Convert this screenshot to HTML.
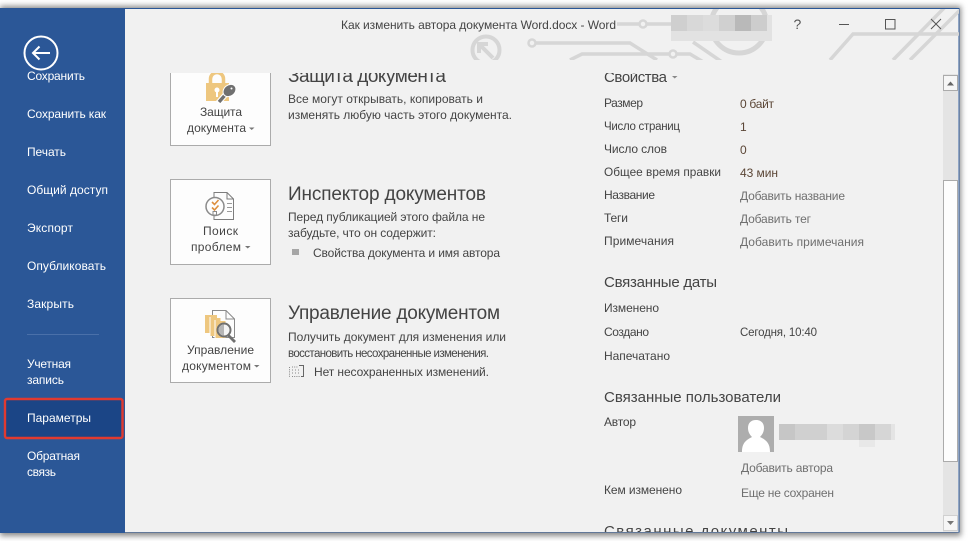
<!DOCTYPE html>
<html lang="ru">
<head>
<meta charset="utf-8">
<title>Word</title>
<style>
html,body{margin:0;padding:0;background:#fff;width:968px;height:541px;overflow:hidden}
svg{display:block}
text{font-family:"Liberation Sans",sans-serif;font-size:12px;fill:#444}
.s text{fill:#fff;font-size:12px}
.h{font-size:19px}
.h2{font-size:15px}
.g{fill:#6f6f6f}
.v{fill:#5b4636}
.art{fill:none;stroke:#d6d6d6;stroke-width:3.5}
</style>
</head>
<body>
<svg width="968" height="541" viewBox="0 0 968 541" xmlns="http://www.w3.org/2000/svg">
<defs>
<filter id="sh" x="-5%" y="-5%" width="110%" height="110%"><feGaussianBlur stdDeviation="3"/></filter>
<clipPath id="artclip"><rect x="126" y="9" width="833" height="51"/></clipPath>
<clipPath id="main"><rect x="126" y="73" width="817" height="459"/></clipPath>
<clipPath id="side"><rect x="0" y="71" width="125" height="461"/></clipPath>
</defs>

<!-- window -->
<rect x="0" y="6" width="961" height="530" fill="#8a8a8a" filter="url(#sh)"/>
<rect x="0" y="8" width="959.5" height="524.5" fill="#2b5797"/>
<rect x="125" y="9" width="833.5" height="523" fill="#f1f1f1"/>
<rect x="0" y="9" width="125" height="524" fill="#2b5797"/>

<!-- title art -->
<g clip-path="url(#artclip)">
<g class="art">
<circle cx="486" cy="50" r="13.5" stroke-width="4"/>
<path d="M493 58L480 45M479 53V44H488" stroke-width="4"/>
<circle cx="532" cy="43" r="3.5" stroke-width="2.5"/>
<path d="M536 43H630L657 60"/>
<path d="M570 60L582 54H669M677 54H690L710 66"/>
<circle cx="673" cy="54" r="3.5" stroke-width="2.5"/>
<path d="M617 24H639M647 24H672"/>
<circle cx="643" cy="24" r="3.5" stroke-width="2.5"/>
<path d="M693 42L722 62"/>
<circle cx="739" cy="25" r="28" stroke-width="5"/>
<path d="M830 60L853 34H959"/>
<path d="M893 60L948 4M910 60L966 4"/>
</g>
</g>
<rect x="671" y="15" width="16" height="16" fill="#cfcfcf"/>
<rect x="687" y="15" width="16" height="16" fill="#d8d8d8"/>
<rect x="703" y="15" width="16" height="16" fill="#dcdcdc"/>
<rect x="719" y="15" width="16" height="16" fill="#d0d0d0"/>
<rect x="735" y="15" width="16" height="16" fill="#b9b9b9"/>
<rect x="751" y="15" width="16" height="16" fill="#cdcdcd"/>
<rect x="671" y="31" width="101" height="10" fill="#e2e2e2"/>
<rect x="767" y="15" width="5" height="16" fill="#e2e2e2"/>

<!-- title -->
<text x="341" y="29" textLength="275" style="font-size:12px">Как изменить автора документа Word.docx - Word</text>
<text x="793.5" y="29" style="font-size:14px;fill:#555">?</text>
<path d="M839 24.5H849" stroke="#555" stroke-width="1" fill="none"/>
<rect x="885.5" y="19.5" width="9.5" height="9.5" fill="none" stroke="#555"/>
<path d="M931 19L941 29M941 19L931 29" stroke="#555" stroke-width="1" fill="none"/>

<!-- sidebar -->
<circle cx="41" cy="53" r="16.5" fill="none" stroke="#fff" stroke-width="2"/>
<path d="M33 53H50M39.5 46.5L33 53L39.5 59.5" fill="none" stroke="#fff" stroke-width="2"/>
<g class="s" clip-path="url(#side)">
<text x="27" y="80" textLength="58">Сохранить</text>
<text x="27" y="118" textLength="79">Сохранить как</text>
<text x="27" y="156" textLength="39">Печать</text>
<text x="27" y="194" textLength="81">Общий доступ</text>
<text x="27" y="232" textLength="46">Экспорт</text>
<text x="27" y="270" textLength="79">Опубликовать</text>
<text x="27" y="308" textLength="47">Закрыть</text>
<rect x="27" y="334" width="72" height="1" fill="#4a70a9"/>
<text x="27" y="368" textLength="44">Учетная</text>
<text x="27" y="384" textLength="37">запись</text>
<rect x="5" y="399" width="117" height="39" fill="#1b4586"/>
<text x="27" y="422" textLength="64">Параметры</text>
<text x="27" y="460" textLength="53">Обратная</text>
<text x="27" y="476" textLength="29">связь</text>
</g>
<rect x="5" y="399" width="117.5" height="39" rx="2" fill="none" stroke="#e03a30" stroke-width="2.4"/>

<!-- main content -->
<g clip-path="url(#main)">
<!-- button 1 -->
<rect x="170.5" y="50.5" width="100" height="95" fill="#fdfdfd" stroke="#ababab"/>
<path d="M210.5 84V79a6.5 6.5 0 0 1 13 0V84" fill="none" stroke="#eec77f" stroke-width="3.5"/>
<path d="M206 83H229V101H206Z" fill="#eec77f"/>
<circle cx="217" cy="90" r="2.5" fill="#fff"/>
<path d="M216 90H218V97H216Z" fill="#fff"/>
<path d="M218 103L226 94" stroke="#fff" stroke-width="5.5" fill="none"/>
<path d="M219 102L226 94" stroke="#707070" stroke-width="3.4" fill="none"/>
<ellipse cx="229.5" cy="90.5" rx="7" ry="5.5" transform="rotate(-40 229.5 90.5)" fill="#707070" stroke="#fff" stroke-width="1"/>
<circle cx="231.5" cy="88.5" r="1" fill="#fff"/>
<text x="200" y="116" textLength="42">Защита</text>
<text x="187" y="132" textLength="59">документа</text>
<path d="M249 127.5H254.5L251.7 130Z" fill="#777"/>

<text class="h" x="288" y="82" textLength="158">Защита документа</text>
<text x="288" y="103" textLength="195">Все могут открывать, копировать и</text>
<text x="288" y="119" textLength="224">изменять любую часть этого документа.</text>

<!-- button 2 -->
<rect x="170.5" y="179.5" width="100" height="85" fill="#fdfdfd" stroke="#ababab"/>
<path d="M214 192.5H227L233.5 199V219.5H214Z" fill="#fdfdfd" stroke="#7d7d7d"/>
<path d="M227 192.5V199H233.5" fill="none" stroke="#7d7d7d"/>
<path d="M227 203.5H232M227 207.5H232M227 211.5H232" stroke="#9a9a9a"/>
<circle cx="215" cy="206.5" r="9" fill="#fdfdfd" stroke="#8a8a8a" stroke-width="1.5"/>
<path d="M212 202L214.5 204.5L218.5 200M212 207.5L214.5 210L218.5 205.5" fill="none" stroke="#dd8f3e" stroke-width="1.6"/>
<rect x="213" y="211.5" width="3.5" height="3.5" fill="none" stroke="#8a8a8a"/>
<text x="203" y="235" textLength="35">Поиск</text>
<text x="191" y="251" textLength="50">проблем</text>
<path d="M245 246H250.5L247.7 248.5Z" fill="#777"/>

<text class="h" x="288" y="200" textLength="198">Инспектор документов</text>
<text x="288" y="221" textLength="197">Перед публикацией этого файла не</text>
<text x="288" y="237" textLength="148">забудьте, что он содержит:</text>
<rect x="292" y="249" width="7" height="6" fill="#a6a6a6"/>
<text x="313" y="257" textLength="187">Свойства документа и имя автора</text>

<!-- button 3 -->
<rect x="170.5" y="298.5" width="100" height="84" fill="#fdfdfd" stroke="#ababab"/>
<path d="M212.5 310.5H226L234.5 319V337.5H212.5Z" fill="#fdfdfd" stroke="#8a8a8a"/>
<path d="M226 310.5V319H234.5" fill="none" stroke="#8a8a8a"/>
<rect x="205" y="315" width="12" height="18" fill="#eec77f"/>
<rect x="209.5" y="317" width="1" height="17" fill="#fdfdfd"/>
<rect x="210.5" y="318" width="10" height="18" fill="#eec77f"/>
<rect x="214.5" y="320" width="1" height="18" fill="#fdfdfd"/>
<rect x="215.5" y="321" width="10" height="17" fill="#eec77f"/>
<path d="M228.5 335.5L235 342" stroke="#707070" stroke-width="2.8" fill="none"/>
<circle cx="224" cy="330" r="6.5" fill="#f4f4f4" stroke="#707070" stroke-width="2"/>
<path d="M224 324.5a5.5 5.5 0 0 0 0 11Z" fill="#b5b5b5"/>
<text x="187" y="354" textLength="67">Управление</text>
<text x="182" y="370" textLength="69">документом</text>
<path d="M254 365H259.5L256.7 367.5Z" fill="#777"/>

<text class="h" x="288" y="319" textLength="212">Управление документом</text>
<text x="288" y="341" textLength="218">Получить документ для изменения или</text>
<text x="288" y="357" textLength="201" style="font-size:11.5px">восстановить несохраненные изменения.</text>
<path d="M289.5 367V377M292 376.5H300M292 367H298M292 370H293M295 370H296M298 370H299M292 373H293M295 373H296M298 373H299" fill="none" stroke="#888" stroke-dasharray="1 1.2"/>
<path d="M299 365.5H303.5V376.5H301" fill="none" stroke="#666"/>
<text x="314" y="376" textLength="175">Нет несохраненных изменений.</text>

<!-- properties -->
<text class="h2" x="604" y="82" textLength="63">Свойства</text>
<path d="M672 76H677.5L674.7 78.5Z" fill="#888"/>
<text x="604" y="107" textLength="39">Размер</text>
<text class="v" x="740" y="108" textLength="34">0 байт</text>
<text x="604" y="130" textLength="76" style="font-size:11.5px">Число страниц</text>
<text class="v" x="740" y="131">1</text>
<text x="604" y="153" textLength="63">Число слов</text>
<text class="v" x="740" y="154">0</text>
<text x="604" y="176" textLength="117" style="font-size:11.8px">Общее время правки</text>
<text class="v" x="740" y="177" textLength="38">43 мин</text>
<text x="604" y="199" textLength="51">Название</text>
<text class="g" x="740" y="200" textLength="105">Добавить название</text>
<text x="604" y="222" textLength="24">Теги</text>
<text class="g" x="740" y="223" textLength="71">Добавить тег</text>
<text x="604" y="245" textLength="70">Примечания</text>
<text class="g" x="740" y="246" textLength="124">Добавить примечания</text>

<text class="h2" x="604" y="287" textLength="113">Связанные даты</text>
<text x="604" y="312" textLength="55">Изменено</text>
<text x="604" y="336" textLength="45">Создано</text>
<text x="740" y="336" textLength="77" style="font-size:11.5px">Сегодня, 10:40</text>
<text x="604" y="360" textLength="66">Напечатано</text>

<text class="h2" x="604" y="402" textLength="177">Связанные пользователи</text>
<text x="604" y="426" textLength="32">Автор</text>
<rect x="738" y="416" width="36" height="36" fill="#adadad"/>
<path d="M742 452C742 443 746 440 752 437C749 434 748 431 748 428C748 423 751 420 756 420C761 420 764 423 764 428C764 431 763 434 760 437C766 440 770 443 770 452Z" fill="#fff"/>
<rect x="779" y="424" width="16" height="16" fill="#c6c6c6"/>
<rect x="795" y="424" width="32" height="16" fill="#d0d0d0"/>
<rect x="827" y="424" width="16" height="16" fill="#dcdcdc"/>
<rect x="843" y="424" width="16" height="16" fill="#d4d4d4"/>
<rect x="859" y="424" width="16" height="16" fill="#c8c8c8"/>
<rect x="875" y="424" width="16" height="16" fill="#d6d6d6"/>
<rect x="891" y="424" width="4" height="16" fill="#e4e4e4"/>
<rect x="859" y="440" width="16" height="7" fill="#e8e8e8"/>
<text class="g" x="741" y="472" textLength="92">Добавить автора</text>
<text x="604" y="494" textLength="78">Кем изменено</text>
<text class="g" x="741" y="497" textLength="93">Еще не сохранен</text>
<text class="h2" x="604" y="536" textLength="184">Связанные документы</text>
</g>

<!-- scrollbar -->
<rect x="943" y="74" width="15" height="458" fill="#e4e4e4"/>
<rect x="943.5" y="75.5" width="14" height="15" fill="#f6f6f6" stroke="#ababab"/>
<path d="M947 85.5H954L950.5 81.5Z" fill="#666"/>
<rect x="943.5" y="180.5" width="14" height="281" fill="#fdfdfd" stroke="#ababab"/>
<rect x="943.5" y="515.5" width="14" height="15" fill="#f6f6f6" stroke="#d0d0d0"/>
<path d="M947 521H954L950.5 525Z" fill="#777"/>
</svg>
</body>
</html>
